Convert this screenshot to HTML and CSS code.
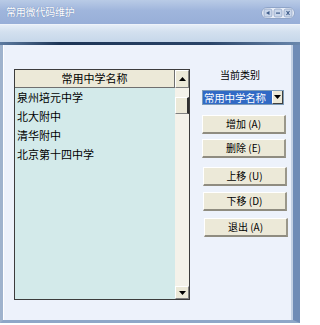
FILE: index.html
```html
<!DOCTYPE html>
<html>
<head>
<meta charset="utf-8">
<link rel="stylesheet" href="styles.css">
</head>
<body>
<div class="window">
  <div class="titlebar">
    <span class="title">常用微代码维护</span>
    <div class="tb-buttons">
      <svg width="34" height="12" viewBox="0 0 34 12">
        <rect x="0.5" y="0.5" width="33" height="11" rx="5.5" fill="#e8eef8" stroke="#8ea4c8"/>
        <rect x="3" y="2" width="8" height="8" rx="2" fill="#c9d6ea" stroke="#7f95bb" stroke-width="0.6"/>
        <rect x="13" y="2" width="8" height="8" rx="2" fill="#c9d6ea" stroke="#7f95bb" stroke-width="0.6"/>
        <rect x="23" y="2" width="8" height="8" rx="2" fill="#c9d6ea" stroke="#7f95bb" stroke-width="0.6"/>
        <path d="M8.5 4 L5 6 L8.5 8 Z" fill="#3c5a88"/>
        <rect x="15" y="5.5" width="4" height="1.2" fill="#3c5a88"/>
        <path d="M25.5 4 L28.5 8 M28.5 4 L25.5 8" stroke="#3c5a88" stroke-width="1.1"/>
      </svg>
    </div>
  </div>
  <div class="toolband"></div>
  <div class="darkline"></div>
  <div class="panel">
    <div class="listbox">
      <div class="listcol">
        <div class="listhead">常用中学名称</div>
        <div class="row">泉州培元中学</div>
        <div class="row">北大附中</div>
        <div class="row">清华附中</div>
        <div class="row">北京第十四中学</div>
      </div>
      <div class="scrollbar">
        <div class="sbtn"><svg width="7" height="4" viewBox="0 0 7 4"><path d="M0 4 L3.5 0 L7 4 Z" fill="#000"/></svg></div>
        <div class="track">
          <div class="thumb"></div>
        </div>
        <div class="sbtn"><svg width="7" height="4" viewBox="0 0 7 4"><path d="M0 0 L3.5 4 L7 0 Z" fill="#000"/></svg></div>
      </div>
    </div>
    <div class="side">
      <div class="label">当前类别</div>
      <div class="combo">
        <span class="combo-text">常用中学名称</span>
        <span class="combo-btn"><svg width="7" height="4" viewBox="0 0 7 4"><path d="M0 0 L3.5 4 L7 0 Z" fill="#000"/></svg></span>
      </div>
      <button class="btn b1">增加 (<u>A</u>)</button>
      <button class="btn b2">删除 (<u>E</u>)</button>
      <button class="btn b3">上移 (<u>U</u>)</button>
      <button class="btn b4">下移 (<u>D</u>)</button>
      <button class="btn b5">退出 (<u>A</u>)</button>
    </div>
  </div>
</div>
</body>
</html>
```
FILE: styles.css
```css
html, body {
  margin: 0;
  padding: 0;
  background: #ffffff;
}
body {
  width: 303px;
  height: 325px;
  font-family: "Noto Sans CJK SC", "Noto Sans", sans-serif;
}
.window {
  width: 300px;
  height: 323px;
  display: flex;
  flex-direction: column;
  background: #dfe8f4;
}
.titlebar {
  height: 24px;
  background: linear-gradient(#b9cbe6, #9fb5dc 45%, #98afd8);
  display: flex;
  align-items: center;
  justify-content: space-between;
  padding: 0 5px 0 6px;
  box-sizing: border-box;
}
.title {
  color: #ffffff;
  font-size: 10px;
  line-height: 12px;
  text-shadow: 0 0 1px #5a76a6;
  letter-spacing: -0.2px;
  margin-top: -1px;
}
.tb-buttons {
  display: flex;
  margin-top: 1px;
}
.toolband {
  height: 18px;
  background: linear-gradient(#e6eef7, #d3e0ef 40%, #c6d7ea);
  border-top: 1px solid #eef3fa;
  box-sizing: border-box;
}
.darkline {
  height: 3px;
  background: linear-gradient(90deg, #5d7ba0, #1c3455 20%, #2a4468 70%, #6a88ad);
}
.panel {
  flex: 1;
  background: #edf2fb;
  border-left: 3px solid #9fb3cd;
  border-right: 7px solid #6f8cb6;
  border-bottom: 3px solid #8ea7c8;
  box-shadow: inset -2px 0 0 #c3d1e4, inset 1px 0 0 #ffffff;
  display: flex;
  padding: 24px 0 0 11px;
  box-sizing: border-box;
}
.listbox {
  width: 176px;
  height: 231px;
  border: 1px solid #3c3c3c;
  box-sizing: border-box;
  display: flex;
  background: #d3eaea;
}
.listcol {
  flex: 1;
  display: flex;
  flex-direction: column;
}
.listhead {
  height: 18px;
  background: #ece9d8;
  border-right: 1px solid #6f6f6f;
  border-bottom: 1px solid #6f6f6f;
  box-sizing: border-box;
  text-align: center;
  font-size: 11px;
  line-height: 17px;
  color: #000;
}
.row {
  height: 19px;
  font-size: 11px;
  line-height: 19px;
  padding-left: 2px;
  color: #000;
}
.scrollbar {
  width: 14px;
  display: flex;
  flex-direction: column;
  background: #f4f2ea;
}
.sbtn {
  height: 13px;
  background: #ece9d8;
  border-top: 1px solid #ffffff;
  border-left: 1px solid #ffffff;
  border-right: 1px solid #808080;
  border-bottom: 1px solid #808080;
  box-sizing: border-box;
  display: flex;
  align-items: center;
  justify-content: center;
}
.sbtn:first-child {
  height: 18px;
}
.track {
  flex: 1;
  padding-top: 9px;
}
.thumb {
  height: 17px;
  background: #ece9d8;
  border-top: 1px solid #ffffff;
  border-left: 1px solid #ffffff;
  border-right: 2px solid #303030;
  border-bottom: 1px solid #808080;
  box-sizing: border-box;
}
.side {
  display: flex;
  flex-direction: column;
  align-items: flex-start;
  margin-left: 12px;
  width: 86px;
}
.label {
  font-size: 10px;
  line-height: 12px;
  margin: 0 0 9px 18px;
  color: #000;
}
.combo {
  width: 82px;
  height: 15px;
  display: flex;
  background: #ffffff;
  border: 1px solid #7f9db9;
  box-sizing: border-box;
  margin-bottom: 10px;
}
.combo-text {
  flex: 1;
  background: #316ac5;
  color: #ffffff;
  font-size: 10.5px;
  line-height: 13px;
  padding-left: 1px;
  letter-spacing: -0.2px;
  white-space: nowrap;
}
.combo-btn {
  width: 11px;
  flex: none;
  background: #ece9d8;
  border-left: 1px solid #ffffff;
  border-right: 1px solid #404040;
  border-bottom: 1px solid #404040;
  box-sizing: border-box;
  display: flex;
  align-items: center;
  justify-content: center;
}
.btn {
  width: 84px;
  height: 19px;
  padding: 0;
  background: #ece9d8;
  border-top: 1px solid #ffffff;
  border-left: 1px solid #ffffff;
  border-right: 2px solid #9a978a;
  border-bottom: 2px solid #8f8c80;
  box-sizing: border-box;
  font-family: "Noto Sans CJK SC", "Noto Sans", sans-serif;
  font-size: 10px;
  line-height: 14px;
  color: #000;
}
.btn u {
  text-decoration: none;
}
.b2 { margin-top: 5px; }
.b3 { margin-top: 9px; margin-left: 1px; }
.b4 { margin-top: 6px; margin-left: 1px; }
.b5 { margin-top: 7px; margin-left: 2px; }
```
